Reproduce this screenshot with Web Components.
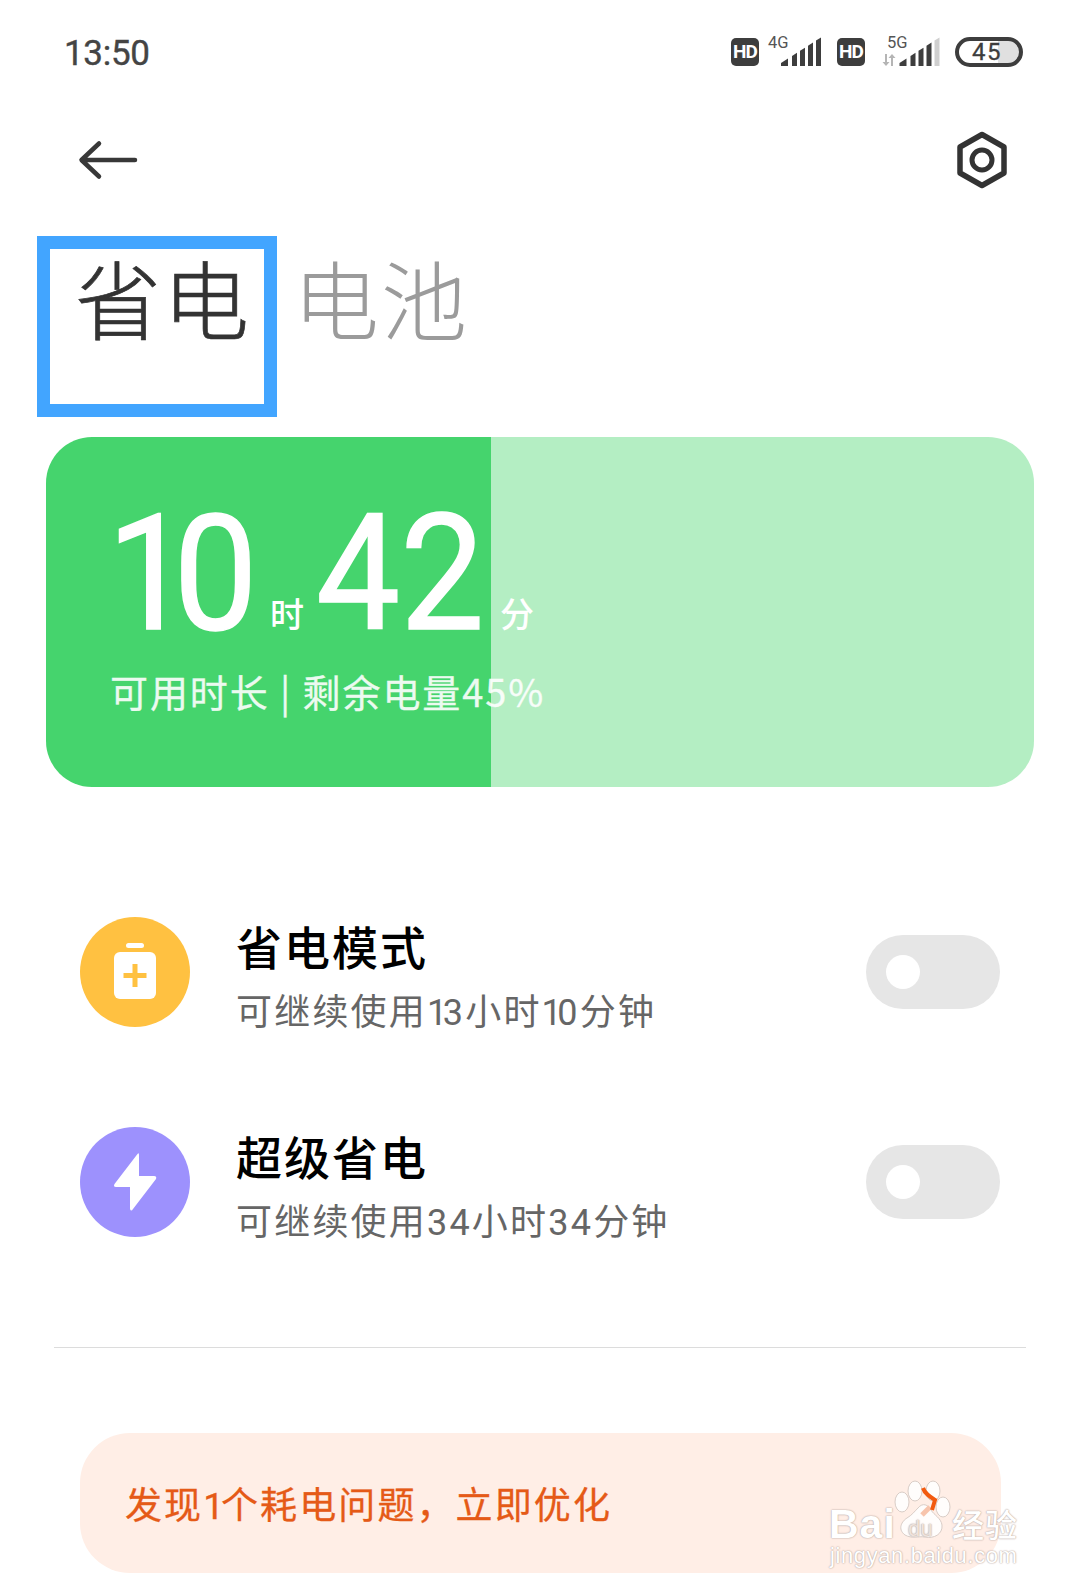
<!DOCTYPE html>
<html lang="zh">
<head>
<meta charset="utf-8">
<title>省电</title>
<style>
  html, body { margin: 0; background: #fff; }
  body {
    width: 1080px; height: 1594px; overflow: hidden; position: relative;
    font-family: Roboto, "Noto Sans CJK SC", sans-serif;
  }
</style>
</head>
<body>
<status-bar></status-bar>
<app-bar></app-bar>
<tab-row><span slot="active">省电</span><span slot="other">电池</span></tab-row>
<battery-card hours="10" minutes="42">可用时长 | 剩余电量45%</battery-card>
<mode-list>
  <mode-row kind="save" heading="省电模式">可继续使用<span class="one">1</span>3小时<span class="one">1</span>0分钟</mode-row>
  <mode-row kind="super" heading="超级省电">可继续使用34小时34分钟</mode-row>
</mode-list>
<opt-banner>发现<span class="one">1</span>个耗电问题，立即优化</opt-banner>
<wm-mark></wm-mark>

<script>
function bars(last) {
  // bars sit under one slanted line, the last one can be greyed out
  const spans = [[0, 7], [11, 16], [19, 24], [27, 32], [35, 40]];
  const top = x => 29 - (3 + x * 0.64);
  return spans.map(([a, b], i) =>
    `<path d="M${a} 29V${top(a)}L${b} ${top(b)}V29Z" fill="${i === 4 ? last : '#3d3d3d'}"/>`).join('');
}

class StatusBar extends HTMLElement {
  constructor() {
    super();
    this.attachShadow({ mode: 'open' }).innerHTML = `
      <style>
        :host { display: flex; height: 104px; box-sizing: border-box; padding: 32px 57px 0 64px; justify-content: space-between; align-items: flex-start; color: #444; }
        .time { font: 400 35px/44px Roboto, sans-serif; letter-spacing: -0.3px; -webkit-text-stroke: .4px #444; }
        .icons { display: flex; align-items: flex-start; padding-top: 5px; }
        .hd { width: 28px; height: 28px; margin-top: 1px; border-radius: 5px; background: #3d3d3d; color: #fff; font: 700 19px/28px Roboto, sans-serif; letter-spacing: -1px; text-align: center; }
        .net { position: relative; width: 53px; height: 30px; margin-left: 9px; }
        .net b { position: absolute; left: 0; top: -2px; font: 400 16.500px/16px Roboto, sans-serif; color: #555; }
        .net svg { position: absolute; right: 0; top: 0; }
        .five { width: 58px; margin-left: 17px; }
        .five b { left: 5px; }
        .five .arrows { left: 0; right: auto; top: 17px; }
        .sim2 { margin-left: 16px; }
        .batt { box-sizing: border-box; width: 68px; height: 30px; margin-left: 15px; border: 4px solid #3d3d3d; border-radius: 15px; overflow: hidden; padding-right: 4px; background: linear-gradient(90deg, #fff 39px, #e0e0e0 39px); background-clip: padding-box; font: 400 24px/22px Roboto, sans-serif; letter-spacing: 1.500px; -webkit-text-stroke: .3px #3d3d3d; text-align: center; color: #3d3d3d; }
      </style>
      <div class="time">13:50</div>
      <div class="icons">
        <div class="hd">HD</div>
        <div class="net"><b>4G</b><svg width="40" height="29" viewBox="0 0 40 29">${bars('#3d3d3d')}</svg></div>
        <div class="hd sim2">HD</div>
        <div class="net five"><b>5G</b>
          <svg class="arrows" width="14" height="12" viewBox="0 0 14 12"><path d="M3 0h2v8h2.500L4 12 .500 8H3ZM9 12h2V4h2.500L10 0 6.500 4H9Z" fill="#b5b5b5"/></svg>
          <svg width="41" height="29" viewBox="0 0 40 29">${bars('#cfcfcf')}</svg>
        </div>
        <div class="batt">45</div>
      </div>`;
  }
}

class AppBar extends HTMLElement {
  constructor() {
    super();
    this.attachShadow({ mode: 'open' }).innerHTML = `
      <style>
        :host { display: flex; height: 112px; padding: 0 71px 0 78px; justify-content: space-between; align-items: center; }
        svg { display: block; }
      </style>
      <svg width="62" height="40" viewBox="0 0 62 40"><path d="M57 20H4M21 3.500 3.500 20 21 36.500" fill="none" stroke="#383838" stroke-width="4.500" stroke-linecap="round" stroke-linejoin="round"/></svg>
      <svg width="54" height="58" viewBox="0 0 54 58"><path d="M27 3.500 49 16v26L27 54.500 5 42V16Z" fill="none" stroke="#333" stroke-width="5.500" stroke-linejoin="round"/><circle cx="27" cy="29" r="10" fill="none" stroke="#333" stroke-width="5"/></svg>`;
  }
}

class TabRow extends HTMLElement {
  constructor() {
    super();
    this.attachShadow({ mode: 'open' }).innerHTML = `
      <style>
        :host { display: flex; margin: 20px 0 0 37px; font: 300 86px/100px "Noto Sans CJK SC", sans-serif; letter-spacing: 2px; }
        .active { box-sizing: border-box; width: 240px; height: 181px; border: 13px solid #42a5ff; padding: 0 0 0 25px; color: #333; -webkit-text-stroke: .7px #333; line-height: 96px; white-space: nowrap; }
        .other { margin-left: 16px; padding-top: 11px; color: #9b9b9b; }
      </style>
      <div class="active"><slot name="active"></slot></div>
      <div class="other"><slot name="other"></slot></div>`;
  }
}

class BatteryCard extends HTMLElement {
  constructor() {
    super();
    this.attachShadow({ mode: 'open' }).innerHTML = `
      <style>
        :host { display: block; box-sizing: border-box; height: 350px; margin: 20px 46px 0; padding: 47px 0 0 61px; border-radius: 46px; background: linear-gradient(90deg, #45d46d 445px, #b4eec3 445px); color: #fff; }
        .time { display: flex; align-items: baseline; height: 180px; font: 400 161px/180px Roboto, sans-serif; -webkit-text-stroke: 1.500px #fff; }
        .h, .m { display: inline-block; transform: scaleX(.93); transform-origin: 0 100%; }
        .h { letter-spacing: -19px; }
        .unit { font: 500 34px/40px "Noto Sans CJK SC", sans-serif; -webkit-text-stroke: 0; transform: translateY(-2px); }
        .u1 { margin: 0 12px 0 20px; }
        .u2 { margin: 0 0 0 3px; }
        .note { margin: 2px 0 0 3px; font: 400 38px/50px "Noto Sans CJK SC", sans-serif; -webkit-text-stroke: .3px #fff; letter-spacing: 1.900px; opacity: .9; white-space: nowrap; }
      </style>
      <div class="time"><span class="h"></span><span class="unit u1">时</span><span class="m"></span><span class="unit u2">分</span></div>
      <div class="note"><slot></slot></div>`;
  }
  connectedCallback() {
    this.shadowRoot.querySelector('.h').textContent = this.getAttribute('hours');
    this.shadowRoot.querySelector('.m').textContent = this.getAttribute('minutes');
  }
}

class ModeList extends HTMLElement {
  constructor() {
    super();
    this.attachShadow({ mode: 'open' }).innerHTML = `
      <style>
        :host { display: flex; flex-direction: column; gap: 100px; margin: 130px 54px 0; padding: 0 26px 110px; border-bottom: 1px solid #dcdcdc; }
      </style>
      <slot></slot>`;
  }
}

const modeIcons = {
  save: `<svg width="110" height="110" viewBox="0 0 110 110"><circle cx="55" cy="55" r="55" fill="#ffc141"/><rect x="46" y="26" width="18" height="5" rx="2.500" fill="#fff"/><rect x="34" y="35" width="42" height="47" rx="6" fill="#fff"/><path d="M55 47v23M43.500 58.500h23" stroke="#ffc141" stroke-width="5"/></svg>`,
  super: `<svg width="110" height="110" viewBox="0 0 110 110"><circle cx="55" cy="55" r="55" fill="#9d91fd"/><path d="M57.500 27 34.500 57Q33 60 36 60H50V82Q51 85 53 82L76 52Q77 49 74 49H59V28Q59 25 57.500 27Z" fill="#fff"/></svg>`
};

class ModeRow extends HTMLElement {
  constructor() {
    super();
    this.attachShadow({ mode: 'open' });
  }
  connectedCallback() {
    this.shadowRoot.innerHTML = `
      <style>
        :host { display: flex; align-items: center; height: 110px; }
        svg { display: block; flex: none; }
        .text { flex: 1; margin-left: 46px; white-space: nowrap; }
        .title { font: 500 46px/60px "Noto Sans CJK SC", sans-serif; color: #000; letter-spacing: 2px; margin-top: 9px; }
        .sub { margin-top: 13px; font: 400 36px/50px Roboto, "Noto Sans CJK SC", sans-serif; color: #666; letter-spacing: 2.200px; }
        ::slotted(.one) { letter-spacing: -4.500px; }
      </style>
      ${modeIcons[this.getAttribute('kind')]}
      <div class="text"><div class="title">${this.getAttribute('heading')}</div><div class="sub"><slot></slot></div></div>
      <toggle-switch></toggle-switch>`;
  }
}

class ToggleSwitch extends HTMLElement {
  constructor() {
    super();
    this.attachShadow({ mode: 'open' }).innerHTML = `
      <style>
        :host { display: flex; align-items: center; box-sizing: border-box; width: 134px; height: 74px; padding-left: 20px; border-radius: 37px; background: #e6e6e6; }
        i { width: 34px; height: 34px; border-radius: 50%; background: #fff; }
      </style>
      <i></i>`;
  }
}

class OptBanner extends HTMLElement {
  constructor() {
    super();
    this.attachShadow({ mode: 'open' }).innerHTML = `
      <style>
        :host { display: flex; align-items: center; box-sizing: border-box; height: 140px; margin: 85px 79px 0 80px; padding: 8px 0 0 45px; border-radius: 50px; background: #ffeee6; color: #e55a17; font: 400 37px/50px Roboto, "Noto Sans CJK SC", sans-serif; letter-spacing: 2.100px; white-space: pre; -webkit-text-stroke: .3px #e55a17; }
        ::slotted(.one) { letter-spacing: -3px; }
      </style>
      <div><slot></slot></div>`;
  }
}

class WmMark extends HTMLElement {
  constructor() {
    super();
    this.attachShadow({ mode: 'open' }).innerHTML = `
      <style>
        :host { position: absolute; left: 826px; top: 1476px; width: 204px; height: 100px; color: #fff; }
        svg { position: absolute; left: 66px; top: 0; }
        span { position: absolute; white-space: nowrap; text-shadow: 0 0 1.500px #b9aaa4, 0 0 1.500px #b9aaa4; }
        .bai { left: 3px; top: 24px; font: 700 41px/48px "Liberation Sans", sans-serif; letter-spacing: 1px; }
        .du { left: 82px; top: 42px; font: 400 22px/22px "Liberation Sans", sans-serif; color: #efe3dd; }
        .jy { left: 126px; top: 26px; font: 500 32px/42px "Noto Sans CJK SC", sans-serif; letter-spacing: 1px; }
        .url { left: 4px; top: 66px; font: 400 22px/28px "Liberation Sans", sans-serif; letter-spacing: .600px; }
      </style>
      <svg width="66" height="66" viewBox="0 0 66 66">
        <g fill="#fff" fill-opacity=".85" stroke="#d9cdc7" stroke-width="1">
          <ellipse cx="10" cy="26" rx="7" ry="10"/><ellipse cx="23" cy="15" rx="7" ry="10"/><ellipse cx="41" cy="15" rx="7" ry="10"/><ellipse cx="51" cy="31" rx="7" ry="10"/>
          <path d="M26 32c5-6 10-3 13 2s10 8 11 15c1 9-8 14-17 12-7-1-13 2-20-2-8-6-3-14 2-17 5-3 7-6 11-10Z"/>
        </g>
        <path d="M38 31 30 39" stroke="#f7c4ac" stroke-width="5"/>
        <path d="M31 12C33 18 38 21 43 24L40 34" fill="none" stroke="#f25a0f" stroke-width="4"/>
      </svg>
      <span class="bai">Bai</span><span class="du">du</span><span class="jy">经验</span><span class="url">jingyan.baidu.com</span>`;
  }
}

customElements.define('status-bar', StatusBar);
customElements.define('app-bar', AppBar);
customElements.define('tab-row', TabRow);
customElements.define('battery-card', BatteryCard);
customElements.define('mode-list', ModeList);
customElements.define('mode-row', ModeRow);
customElements.define('toggle-switch', ToggleSwitch);
customElements.define('opt-banner', OptBanner);
customElements.define('wm-mark', WmMark);
</script>
</body>
</html>
